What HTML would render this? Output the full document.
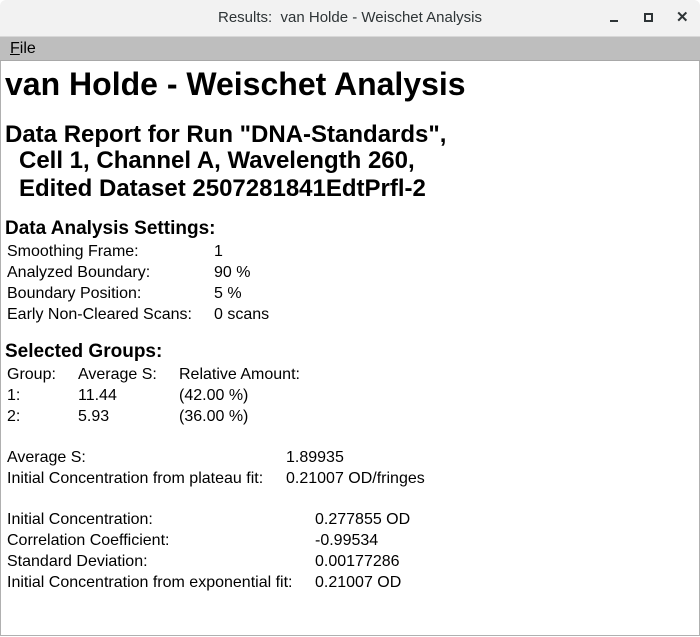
<!DOCTYPE html>
<html><head><style>
body{margin:0;width:700px;height:637px;overflow:hidden;background:#fff;font-family:"Liberation Sans",Arial,sans-serif;position:relative}
.tb{position:absolute;left:0;top:0;width:700px;height:36px;background:#f2f2f2;border-bottom:1px solid #d8d8d8;border-radius:6px 6px 0 0}
.tt{position:absolute;left:0;width:700px;top:9px;text-align:center;font-size:15px;color:#2e3436}
.mb{position:absolute;left:0;top:37px;width:700px;height:23px;background:#bebebe;border-bottom:1px solid #a8a8a8}
.c{position:absolute;left:0;top:61px;width:698px;height:574px;border:1px solid #b0b0b0;border-top:none}
.t{position:absolute;white-space:nowrap;font-size:16px;color:#000;line-height:18px}
.h1{font-size:32px;font-weight:bold;line-height:36px}
.h2{font-size:24px;font-weight:bold;line-height:26px}
.h3{font-size:19px;font-weight:bold;line-height:22px}
</style></head><body>
<div class="tb"><div class="tt">Results:&nbsp; van Holde - Weischet Analysis</div>
<div style="position:absolute;left:610px;top:20px;width:8px;height:2px;background:#2e3436"></div>
<div style="position:absolute;left:644px;top:13px;width:5px;height:5px;border:2px solid #2e3436"></div>
<div style="position:absolute;left:676px;top:8px;font-size:15px;font-weight:bold;color:#2e3436">✕</div>
</div>
<div class="mb"><div class="t" style="left:10px;top:3px;font-size:16px"><u>F</u>ile</div></div>
<div class="c"></div>
<div class="t h1" style="left:5px;top:66px">van Holde - Weischet Analysis</div>
<div class="t h2" style="left:5px;top:122px">Data Report for Run "DNA-Standards",</div>
<div class="t h2" style="left:19px;top:148px">Cell 1, Channel A, Wavelength 260,</div>
<div class="t h2" style="left:19px;top:176px">Edited Dataset 2507281841EdtPrfl-2</div>
<div class="t h3" style="left:5px;top:218px">Data Analysis Settings:</div>
<div class="t" style="left:7px;top:243px">Smoothing Frame:</div><div class="t" style="left:214px;top:243px">1</div>
<div class="t" style="left:7px;top:264px">Analyzed Boundary:</div><div class="t" style="left:214px;top:264px">90 %</div>
<div class="t" style="left:7px;top:285px">Boundary Position:</div><div class="t" style="left:214px;top:285px">5 %</div>
<div class="t" style="left:7px;top:306px">Early Non-Cleared Scans:</div><div class="t" style="left:214px;top:306px">0 scans</div>
<div class="t h3" style="left:5px;top:341px">Selected Groups:</div>
<div class="t" style="left:7px;top:366px">Group:</div><div class="t" style="left:78px;top:366px">Average S:</div><div class="t" style="left:179px;top:366px">Relative Amount:</div>
<div class="t" style="left:7px;top:387px">1:</div><div class="t" style="left:78px;top:387px">11.44</div><div class="t" style="left:179px;top:387px">(42.00 %)</div>
<div class="t" style="left:7px;top:408px">2:</div><div class="t" style="left:78px;top:408px">5.93</div><div class="t" style="left:179px;top:408px">(36.00 %)</div>
<div class="t" style="left:7px;top:449px">Average S:</div><div class="t" style="left:286px;top:449px">1.89935</div>
<div class="t" style="left:7px;top:470px">Initial Concentration from plateau fit:</div><div class="t" style="left:286px;top:470px">0.21007 OD/fringes</div>
<div class="t" style="left:7px;top:511px">Initial Concentration:</div><div class="t" style="left:315px;top:511px">0.277855 OD</div>
<div class="t" style="left:7px;top:532px">Correlation Coefficient:</div><div class="t" style="left:315px;top:532px">-0.99534</div>
<div class="t" style="left:7px;top:553px">Standard Deviation:</div><div class="t" style="left:315px;top:553px">0.00177286</div>
<div class="t" style="left:7px;top:574px">Initial Concentration from exponential fit:</div><div class="t" style="left:315px;top:574px">0.21007 OD</div>
</body></html>
